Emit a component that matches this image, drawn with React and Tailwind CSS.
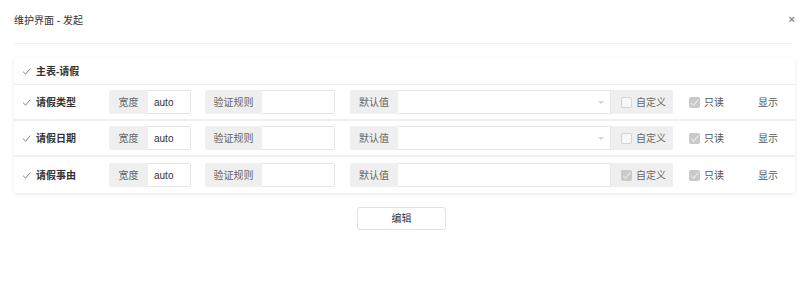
import React from 'react';

const Check = ({ className = '' }) => (
  <svg viewBox="0 0 10 10" className={className} fill="none" stroke="currentColor" strokeWidth="1" strokeLinecap="round" strokeLinejoin="round">
    <path d="M1.5 5.5 L4 8 L8.8 2.2" />
  </svg>
);

const Box = ({ checked }) =>
  checked ? (
    <span className="w-[11px] h-[11px] rounded-[2px] bg-[#c9c9c9] flex items-center justify-center text-white">
      <Check className="w-[9px] h-[9px]" />
    </span>
  ) : (
    <span className="w-[11px] h-[11px] rounded-[2px] border border-[#d4d4d4] bg-[#f7f7f7]" />
  );

const rows = [
  { name: '请假类型', select: true, custom: false },
  { name: '请假日期', select: true, custom: false },
  { name: '请假事由', select: false, custom: true },
];

const Row = ({ row, last }) => (
  <div className={`h-[36px] flex items-center pl-[8px] ${last ? '' : 'border-b-2 border-[#edf0f4]'}`}>
    <div className="w-[87px] flex items-center gap-[5px] text-[#333] font-bold">
      <Check className="w-[9px] h-[9px] text-[#777]" />
      <span>{row.name}</span>
    </div>

    <div className="w-[82px] h-[24px] flex">
      <span className="w-[39px] bg-[#efefef] text-[#666] rounded-l-[2px] flex items-center justify-center">宽度</span>
      <span className="flex-1 border border-l-0 border-[#e6e6e6] rounded-r-[2px] flex items-center pl-[6px] text-[#333]">auto</span>
    </div>

    <div className="ml-[14px] w-[130px] h-[24px] flex">
      <span className="w-[57px] bg-[#efefef] text-[#666] rounded-l-[2px] flex items-center justify-center">验证规则</span>
      <span className="flex-1 border border-l-0 border-[#e6e6e6] rounded-r-[2px]" />
    </div>

    <div className="ml-[15px] w-[323px] h-[24px] flex">
      <span className="w-[48px] bg-[#efefef] text-[#666] rounded-l-[2px] flex items-center justify-center">默认值</span>
      <span className="w-[213px] border border-l-0 border-[#e6e6e6] flex items-center justify-end pr-[6px]">
        {row.select && (
          <svg viewBox="0 0 8 4" className="w-[6px] h-[3px] text-[#d6d6d6]" fill="currentColor">
            <path d="M0 0 L8 0 L4 4 Z" />
          </svg>
        )}
      </span>
      <span className="flex-1 bg-[#efefef] text-[#666] rounded-r-[2px] flex items-center gap-[4px] pl-[10px]">
        <Box checked={row.custom} />
        <span>自定义</span>
      </span>
    </div>

    <div className="ml-[16px] flex items-center gap-[4px] text-[#555]">
      <Box checked />
      <span>只读</span>
    </div>

    <span className="ml-[34px] text-[#555]">显示</span>
  </div>
);

export default function App() {
  return (
    <div className="w-[807px] h-[281px] bg-white text-[10px] font-['Liberation_Sans','Noto_Sans_CJK_SC',sans-serif]">
      <div className="mx-[14px] h-[44px] flex items-center justify-between border-b border-[#f0f0f0]">
        <span className="text-[#333] -mt-[2px]">维护界面 - 发起</span>
        <span className="text-[#888] font-bold text-[11px] -mt-[5px] -mr-[2px]">×</span>
      </div>

      <div className="ml-[14px] mr-[12px] mt-[14px] rounded-[3px] bg-white shadow-[0_1px_4px_rgba(0,0,0,0.09)]">
        <div className="h-[27px] flex items-center gap-[5px] pl-[8px] border-b border-[#eeeeee] text-[#333] font-bold">
          <Check className="w-[9px] h-[9px] text-[#777]" />
          <span>主表-请假</span>
        </div>
        {rows.map((r, i) => (
          <Row key={r.name} row={r} last={i === rows.length - 1} />
        ))}
      </div>

      <div className="flex justify-center mt-[14px] pr-[4px]">
        <button className="w-[89px] h-[23px] border border-[#e2e2e2] rounded-[3px] bg-white text-[#333] text-[10px]">
          编辑
        </button>
      </div>
    </div>
  );
}
